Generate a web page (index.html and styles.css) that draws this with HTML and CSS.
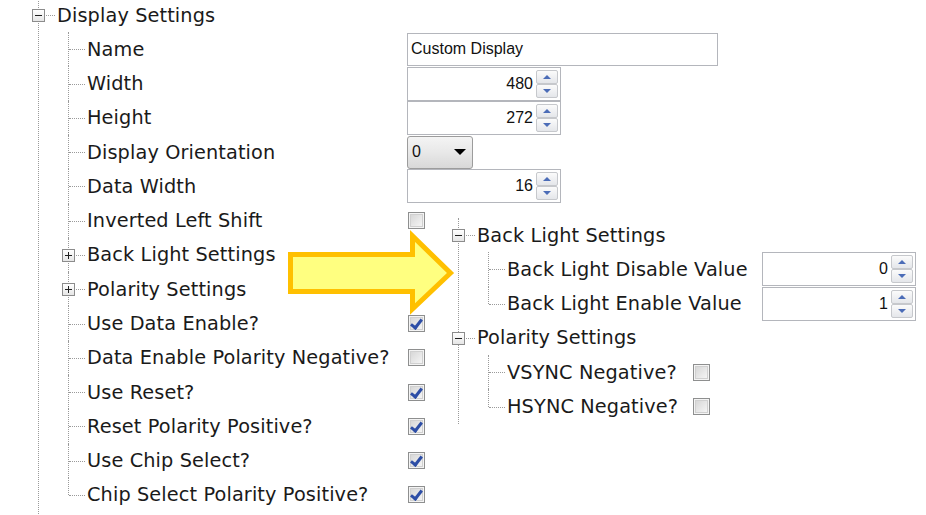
FILE: index.html
```html
<!DOCTYPE html>
<html>
<head>
<meta charset="utf-8">
<link rel="stylesheet" href="styles.css">
</head>
<body>
<div class="page">
  <div class="left">
    <div class="root">
      <div class="head"><span class="exp minus"></span><span class="hline"></span><span class="lbl">Display Settings</span></div>
      <div class="children">
        <div class="row"><span class="lbl w320">Name</span><div class="text-field">Custom Display</div></div>
        <div class="row"><span class="lbl w320">Width</span><div class="spin"><span class="num">480</span><span class="btns"><span class="btn up"></span><span class="btn down"></span></span></div></div>
        <div class="row"><span class="lbl w320">Height</span><div class="spin"><span class="num">272</span><span class="btns"><span class="btn up"></span><span class="btn down"></span></span></div></div>
        <div class="row"><span class="lbl w320">Display Orientation</span><div class="combo"><span class="cval">0</span><span class="caret"></span></div></div>
        <div class="row"><span class="lbl w320">Data Width</span><div class="spin"><span class="num">16</span><span class="btns"><span class="btn up"></span><span class="btn down"></span></span></div></div>
        <div class="row"><span class="lbl w320">Inverted Left Shift</span><span class="cb"></span></div>
        <div class="row"><span class="exp plus"></span><span class="lbl w320">Back Light Settings</span></div>
        <div class="row"><span class="exp plus"></span><span class="lbl w320">Polarity Settings</span></div>
        <div class="row"><span class="lbl w320">Use Data Enable?</span><span class="cb checked"></span></div>
        <div class="row"><span class="lbl w320">Data Enable Polarity Negative?</span><span class="cb"></span></div>
        <div class="row"><span class="lbl w320">Use Reset?</span><span class="cb checked"></span></div>
        <div class="row"><span class="lbl w320">Reset Polarity Positive?</span><span class="cb checked"></span></div>
        <div class="row"><span class="lbl w320">Use Chip Select?</span><span class="cb checked"></span></div>
        <div class="row last"><span class="lbl w320">Chip Select Polarity Positive?</span><span class="cb checked"></span></div>
      </div>
    </div>
  </div>
  <div class="right">
    <div class="root rroot">
      <div class="head"><span class="exp minus"></span><span class="hline"></span><span class="lbl">Back Light Settings</span></div>
      <div class="children rchildren">
        <div class="row"><span class="lbl w255">Back Light Disable Value</span><div class="spin"><span class="num">0</span><span class="btns"><span class="btn up"></span><span class="btn down"></span></span></div></div>
        <div class="row last"><span class="lbl w255">Back Light Enable Value</span><div class="spin"><span class="num">1</span><span class="btns"><span class="btn up"></span><span class="btn down"></span></span></div></div>
      </div>
      <div class="head"><span class="exp minus"></span><span class="hline"></span><span class="lbl">Polarity Settings</span></div>
      <div class="children rchildren">
        <div class="row"><span class="lbl w186">VSYNC Negative?</span><span class="cb"></span></div>
        <div class="row last"><span class="lbl w186">HSYNC Negative?</span><span class="cb"></span></div>
      </div>
    </div>
  </div>
  <svg class="arrow" width="926" height="515" viewBox="0 0 926 515">
    <polygon points="290.5,254.5 412.5,254.5 412.5,236 450.5,273 412.5,309 412.5,291.5 290.5,291.5" fill="#ffff80" stroke="#ffc000" stroke-width="5" stroke-linejoin="miter"/>
  </svg>
</div>
</body>
</html>
```

FILE: styles.css
```css
html, body {
  margin: 0;
  padding: 0;
  background: #ffffff;
  overflow: hidden;
}
body {
  width: 926px;
  height: 515px;
  font-family: "DejaVu Sans", Verdana, sans-serif;
  font-size: 19.3px;
  letter-spacing: 0.12px;
  color: #1a1a1a;
}
.page {
  position: relative;
  display: flex;
  align-items: flex-start;
  width: 926px;
  height: 515px;
}
.left {
  width: 458px;
  flex: none;
  margin-top: -2.14px;
}
.root {
  position: relative;
  margin-left: 38px;
  border-left: 1px dotted #9a9a9a;
  height: 530px;
}
.right {
  flex: none;
  margin-top: 218px;
}
.rroot {
  margin-left: 0;
  height: 206px;
}
.head, .row {
  position: relative;
  display: flex;
  align-items: center;
  height: 34.29px;
}
.head .lbl {
  padding-left: 18px;
}
.hline {
  position: absolute;
  left: 5px;
  top: 50%;
  width: 11px;
  border-top: 1px dotted #9a9a9a;
}
.exp {
  position: absolute;
  left: -7px;
  top: 50%;
  margin-top: -6px;
  width: 11px;
  height: 11px;
  border: 1px solid #8c8c8c;
  background: linear-gradient(#ffffff, #e6e6e6);
  box-sizing: content-box;
  z-index: 2;
}
.exp::before {
  content: "";
  position: absolute;
  left: 2px;
  top: 5px;
  width: 7px;
  height: 1px;
  background: #202020;
}
.exp.plus::after {
  content: "";
  position: absolute;
  left: 5px;
  top: 2px;
  width: 1px;
  height: 7px;
  background: #202020;
}
.children {
  margin-left: 29px;
}
.children .row::before {
  content: "";
  position: absolute;
  left: 0;
  top: 0;
  bottom: 0;
  border-left: 1px dotted #9a9a9a;
}
.children .row.last::before {
  bottom: 50%;
}
.children .row::after {
  content: "";
  position: absolute;
  left: 1px;
  top: 50%;
  width: 16px;
  border-top: 1px dotted #9a9a9a;
}
.children .row .exp {
  left: -6px;
}
.children .row .lbl {
  padding-left: 19px;
}
.lbl {
  white-space: nowrap;
  box-sizing: border-box;
  flex: none;
  position: relative;
  z-index: 1;
}
.w320 { width: 339px; }
.w255 { width: 274px; }
.w186 { width: 204px; }

.text-field {
  flex: none;
  box-sizing: border-box;
  width: 311px;
  height: 33px;
  border: 1px solid #b4b6bc;
  font-family: "Liberation Sans", Arial, sans-serif;
  font-size: 16px;
  letter-spacing: 0;
  color: #111;
  display: flex;
  align-items: center;
  padding-left: 3px;
  white-space: nowrap;
}
.spin {
  flex: none;
  box-sizing: border-box;
  width: 154px;
  height: 34px;
  border: 1px solid #b4b6bc;
  display: flex;
  align-items: center;
  font-family: "Liberation Sans", Arial, sans-serif;
  font-size: 16px;
  letter-spacing: 0;
  color: #111;
}
.num {
  flex: 1;
  text-align: right;
  padding-right: 3px;
}
.btns {
  flex: none;
  display: flex;
  flex-direction: column;
  width: 22px;
  margin-right: 2px;
}
.btn {
  position: relative;
  box-sizing: border-box;
  height: 14px;
  border: 1px solid #c6c8cc;
  border-radius: 2px;
  background: linear-gradient(#fbfbfb, #e4e6ea);
}
.btn::after {
  content: "";
  position: absolute;
  left: 6px;
  width: 0;
  height: 0;
  border-left: 4px solid transparent;
  border-right: 4px solid transparent;
}
.btn.up::after {
  top: 4px;
  border-bottom: 4px solid #4b6cb7;
}
.btn.down::after {
  top: 4px;
  border-top: 4px solid #4b6cb7;
}
.combo {
  flex: none;
  box-sizing: border-box;
  width: 66px;
  height: 33px;
  border: 1px solid #9c9c9c;
  border-radius: 3px;
  background: linear-gradient(#f4f4f4, #e8e8e8 50%, #d8d8d8);
  display: flex;
  align-items: center;
  justify-content: space-between;
  padding: 0 6px 0 4px;
  font-family: "Liberation Sans", Arial, sans-serif;
  font-size: 16px;
  letter-spacing: 0;
  color: #111;
}
.caret {
  width: 0;
  height: 0;
  border-left: 6px solid transparent;
  border-right: 6px solid transparent;
  border-top: 6px solid #000;
}
.cb {
  position: relative;
  box-sizing: border-box;
  width: 17px;
  height: 17px;
  margin-left: 1px;
  border: 1px solid #8e8f8f;
  background: linear-gradient(135deg, #d2d2d2, #f2f2f2 80%);
  box-shadow: inset 0 0 0 1px #f4f4f4, inset 0 0 0 2px #d0d0d0;
  flex: none;
}
.cb.checked::after {
  content: "";
  position: absolute;
  left: 4px;
  top: 1px;
  width: 4px;
  height: 9px;
  border-right: 3px solid #2d4ea6;
  border-bottom: 3px solid #2d4ea6;
  transform: rotate(38deg);
  transform-origin: center;
}
.arrow {
  position: absolute;
  left: 0;
  top: 0;
  pointer-events: none;
  z-index: 5;
}
```
